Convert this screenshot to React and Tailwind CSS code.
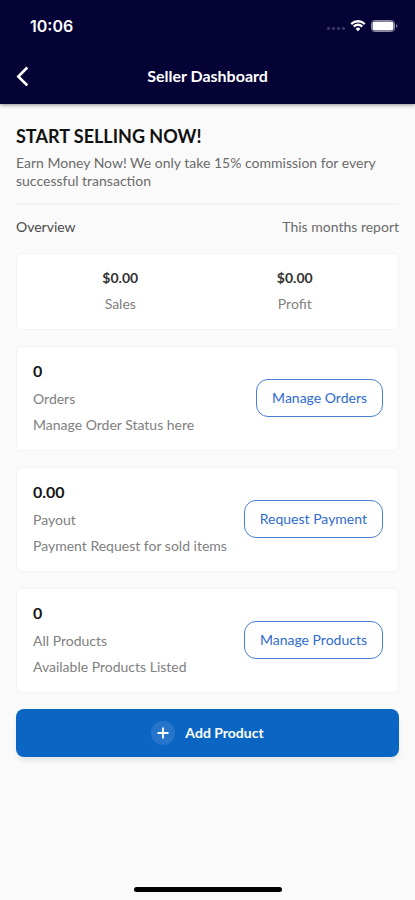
import React from 'react';

const stats = [
  { label: 'Sales', value: '$0.00' },
  { label: 'Profit', value: '$0.00' },
];

const sections = [
  { value: '0', title: 'Orders', description: 'Manage Order Status here', action: 'Manage Orders' },
  { value: '0.00', title: 'Payout', description: 'Payment Request for sold items', action: 'Request Payment' },
  { value: '0', title: 'All Products', description: 'Available Products Listed', action: 'Manage Products' },
];

const StatusBar = () => (
  <div className="flex h-12 items-center justify-between pt-1 pr-4 pl-[30px]">
    <span className="font-['Inter',sans-serif] text-base font-semibold">10:06</span>
    <div className="flex items-center gap-1">
      {/* Signal */}
      <svg className="h-3 w-5" viewBox="0 0 20 12" fill="#3a3763">
        <rect x="1" y="7" width="3" height="3" rx="1" />
        <rect x="6" y="7" width="3" height="3" rx="1" />
        <rect x="11" y="7" width="3" height="3" rx="1" />
        <rect x="16" y="7" width="3" height="3" rx="1" />
      </svg>
      {/* Wifi */}
      <svg className="h-3 w-4" viewBox="0 0 16 12" fill="#fff">
        <path d="M8 2.4c2.2 0 4.2.85 5.7 2.3a.4.4 0 0 0 .55 0l1.05-1.1a.4.4 0 0 0 0-.6 10.5 10.5 0 0 0-14.6 0 .4.4 0 0 0 0 .6l1.05 1.1c.15.15.4.15.55 0A8.2 8.2 0 0 1 8 2.4z" />
        <path d="M8 6c1.2 0 2.3.45 3.15 1.2.15.15.4.15.55 0l1.1-1.1a.4.4 0 0 0 0-.6 7 7 0 0 0-9.6 0 .4.4 0 0 0 0 .6l1.1 1.1c.15.15.4.15.55 0A4.7 4.7 0 0 1 8 6z" />
        <path d="M10.2 8.5a.4.4 0 0 1 0 .6L8.3 11a.4.4 0 0 1-.6 0L5.8 9.1a.4.4 0 0 1 0-.6 3.5 3.5 0 0 1 4.4 0z" />
      </svg>
      {/* Battery */}
      <svg className="ml-px h-3 w-7" viewBox="0 0 28 12">
        <rect x="0.5" y="0.5" width="23" height="11" rx="3" fill="none" stroke="#8b89a5" />
        <rect x="1.5" y="1.5" width="21" height="9" rx="2" fill="#fff" />
        <path d="M25 4.2v3.6c.8-.3 1.4-1 1.4-1.8s-.6-1.5-1.4-1.8z" fill="#8b89a5" />
      </svg>
    </div>
  </div>
);

const Header = () => (
  <header className="bg-[#050235] text-white shadow-[0_1px_4px_rgba(0,0,0,0.45)]">
    <StatusBar />
    <div className="grid h-14 grid-cols-[48px_1fr_48px] items-center">
      <button type="button" aria-label="Back" className="flex h-full items-center pl-4">
        <svg
          className="h-5 w-3"
          viewBox="0 0 12 20"
          fill="none"
          stroke="currentColor"
          strokeWidth="2.6"
        >
          <path d="M11.3 1.5L2.3 10.5l9 9" />
        </svg>
      </button>
      <h1 className="text-center text-base font-bold">Seller Dashboard</h1>
    </div>
  </header>
);

const SectionCard = ({ value, title, description, action }) => (
  <section className="flex items-center justify-between rounded-md border border-[#f3f3f3] bg-white pt-3 pr-[15px] pb-[13px] pl-4">
    <div className="text-sm leading-6 text-[#808080]">
      <p className="text-base leading-6 font-bold text-[#161616]">{value}</p>
      <h2 className="mt-1">{title}</h2>
      <p className="mt-0.5">{description}</p>
    </div>
    <button
      type="button"
      className="h-[38px] rounded-xl border border-[#4a7fd6] px-[15px] text-sm text-[#2f6bcf]"
    >
      {action}
    </button>
  </section>
);

const App = () => {
  return (
    <div className="flex min-h-screen flex-col bg-[#fafafa] font-['Lato',sans-serif]">
      <Header />

      <main className="flex flex-1 flex-col px-4 pt-5">
        <h2 className="text-lg leading-6 font-bold text-[#111]">START SELLING NOW!</h2>
        <p className="mt-1.5 text-sm leading-[18px] text-[#6b6b6b]">
          Earn Money Now! We only take 15% commission for every successful transaction
        </p>

        <hr className="mt-[13px] border-t-2 border-[#f3f3f3]" />

        <div className="mt-2.5 flex items-center justify-between text-sm leading-6">
          <h3 className="text-[#4a4a4a]">Overview</h3>
          <span className="text-[#6b6b6b]">This months report</span>
        </div>

        <div className="mt-3.5 flex flex-col gap-4">
          {/* Monthly totals */}
          <dl className="grid grid-cols-2 rounded-md border border-[#f3f3f3] bg-white px-4 pt-3 pb-[13px] text-center text-sm leading-6">
            {stats.map((stat) => (
              <div key={stat.label} className="flex flex-col-reverse gap-0.5">
                <dt className="text-[#808080]">{stat.label}</dt>
                <dd className="font-bold text-[#333]">{stat.value}</dd>
              </div>
            ))}
          </dl>

          {sections.map((section) => (
            <SectionCard key={section.title} {...section} />
          ))}

          <button
            type="button"
            className="flex h-12 items-center justify-center gap-2.5 rounded-lg bg-[#0a66c2] text-sm font-bold text-white shadow-[0_4px_5px_rgba(0,0,0,0.08)]"
          >
            <span className="flex h-6 w-6 items-center justify-center rounded-full bg-[#2675ca]">
              <svg className="h-3 w-3" viewBox="0 0 12 12" stroke="currentColor" strokeWidth="1.8">
                <path d="M6 0.5v11M0.5 6h11" />
              </svg>
            </span>
            Add Product
          </button>
        </div>
      </main>

      {/* Home indicator */}
      <div className="flex justify-center pb-2">
        <div className="h-[5px] w-[148px] rounded-full bg-black" />
      </div>
    </div>
  );
};

export default App;
